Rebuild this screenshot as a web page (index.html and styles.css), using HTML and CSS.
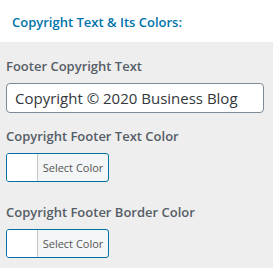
FILE: index.html
```html
<!DOCTYPE html>
<html>
<head>
<meta charset="utf-8">
<link rel="stylesheet" href="styles.css">
</head>
<body>
<div class="header"><h3 class="title">Copyright Text &amp; Its Colors:</h3></div>
<div class="section">
  <label class="label first">Footer Copyright Text</label>
  <input class="text-input" type="text" value="Copyright © 2020 Business Blog">
  <label class="label">Copyright Footer Text Color</label>
  <div class="color-row">
    <button class="color-btn"><span class="swatch"></span><span class="btn-text">Select Color</span></button>
  </div>
  <label class="label spaced">Copyright Footer Border Color</label>
  <div class="color-row">
    <button class="color-btn"><span class="swatch"></span><span class="btn-text">Select Color</span></button>
  </div>
</div>
</body>
</html>
```
FILE: styles.css
```css
html, body {
  margin: 0;
  padding: 0;
  height: 100%;
  background: #eeeeee;
  font-family: "Open Sans", "Noto Sans", sans-serif;
}
.header {
  background: #ffffff;
  height: 42px;
  box-sizing: border-box;
  padding: 12px 0 0 12px;
}
.title {
  margin: 0;
  font-size: 13px;
  line-height: 20px;
  font-weight: 600;
  color: #0073aa;
}
.section {
  display: flex;
  flex-direction: column;
  align-items: flex-start;
  padding: 0 9px 0 6px;
}
.label {
  display: block;
  font-size: 13px;
  line-height: 20px;
  font-weight: 600;
  color: #555d66;
  margin: 13px 0 7px;
}
.label.first { margin-top: 14px; }
.label.spaced { margin-top: 20px; }
.text-input {
  box-sizing: border-box;
  width: 258px;
  height: 30px;
  margin: 0;
  padding: 0 8px;
  border: 1px solid #7e8993;
  border-radius: 4px;
  background: #ffffff;
  font-family: inherit;
  font-size: 15px;
  color: #32373c;
}
.color-btn {
  display: flex;
  align-items: stretch;
  box-sizing: border-box;
  height: 29px;
  width: 103px;
  margin: 0;
  padding: 0;
  border: 1px solid #0071a1;
  border-radius: 3px;
  background: #f3f5f6;
  overflow: hidden;
  font-family: inherit;
  cursor: pointer;
}
.swatch {
  width: 30px;
  background: #ffffff;
  border-right: 1px solid #c6c6c6;
}
.btn-text {
  flex: 1;
  display: flex;
  align-items: center;
  justify-content: center;
  font-size: 11px;
  color: #555555;
}
```
